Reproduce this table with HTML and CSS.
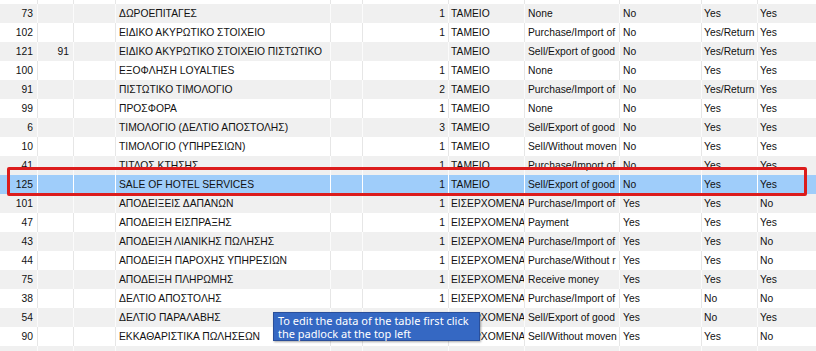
FILE: index.html
```html
<!DOCTYPE html>
<html lang="el">
<head>
<meta charset="utf-8">
<title>Document types</title>
<link rel="stylesheet" href="styles.css">
</head>
<body>
<div class="screen">
  <div class="grid">
    <div class="row w cut-top"><span></span><span></span><span></span><span></span><span></span><span></span><span></span><span></span><span></span><span></span><span></span></div>
    <div class="row g"><span class="r">73</span><span class="r"></span><span></span><span>ΔΩΡΟΕΠΙΤΑΓΕΣ</span><span></span><span class="r">1</span><span>ΤΑΜΕΙΟ</span><span>None</span><span>No</span><span>Yes</span><span>Yes</span></div>
    <div class="row w"><span class="r">102</span><span class="r"></span><span></span><span>ΕΙΔΙΚΟ ΑΚΥΡΩΤΙΚΟ ΣΤΟΙΧΕΙΟ</span><span></span><span class="r">1</span><span>ΤΑΜΕΙΟ</span><span>Purchase/Import of</span><span>No</span><span>Yes/Return</span><span>Yes</span></div>
    <div class="row g"><span class="r">121</span><span class="r">91</span><span></span><span>ΕΙΔΙΚΟ ΑΚΥΡΩΤΙΚΟ ΣΤΟΙΧΕΙΟ ΠΙΣΤΩΤΙΚΟ</span><span></span><span class="r"></span><span>ΤΑΜΕΙΟ</span><span>Sell/Export of good</span><span>No</span><span>Yes/Return</span><span>Yes</span></div>
    <div class="row w"><span class="r">100</span><span class="r"></span><span></span><span>ΕΞΟΦΛΗΣΗ LOYALTIES</span><span></span><span class="r">1</span><span>ΤΑΜΕΙΟ</span><span>None</span><span>No</span><span>Yes</span><span>Yes</span></div>
    <div class="row g"><span class="r">91</span><span class="r"></span><span></span><span>ΠΙΣΤΩΤΙΚΟ ΤΙΜΟΛΟΓΙΟ</span><span></span><span class="r">2</span><span>ΤΑΜΕΙΟ</span><span>Purchase/Import of</span><span>No</span><span>Yes/Return</span><span>Yes</span></div>
    <div class="row w"><span class="r">99</span><span class="r"></span><span></span><span>ΠΡΟΣΦΟΡΑ</span><span></span><span class="r">1</span><span>ΤΑΜΕΙΟ</span><span>None</span><span>No</span><span>Yes</span><span>Yes</span></div>
    <div class="row g"><span class="r">6</span><span class="r"></span><span></span><span>ΤΙΜΟΛΟΓΙΟ (ΔΕΛΤΙΟ ΑΠΟΣΤΟΛΗΣ)</span><span></span><span class="r">3</span><span>ΤΑΜΕΙΟ</span><span>Sell/Export of good</span><span>No</span><span>Yes</span><span>Yes</span></div>
    <div class="row w"><span class="r">10</span><span class="r"></span><span></span><span>ΤΙΜΟΛΟΓΙΟ (ΥΠΗΡΕΣΙΩΝ)</span><span></span><span class="r">1</span><span>ΤΑΜΕΙΟ</span><span>Sell/Without moven</span><span>No</span><span>Yes</span><span>Yes</span></div>
    <div class="row g"><span class="r">41</span><span class="r"></span><span></span><span>ΤΙΤΛΟΣ ΚΤΗΣΗΣ</span><span></span><span class="r">1</span><span>ΤΑΜΕΙΟ</span><span>Purchase/Import of</span><span>No</span><span>Yes</span><span>Yes</span></div>
    <div class="row sel"><span class="r">125</span><span class="r"></span><span></span><span>SALE OF HOTEL SERVICES</span><span></span><span class="r">1</span><span>ΤΑΜΕΙΟ</span><span>Sell/Export of good</span><span>No</span><span>Yes</span><span>Yes</span></div>
    <div class="row g"><span class="r">101</span><span class="r"></span><span></span><span>ΑΠΟΔΕΙΞΕΙΣ ΔΑΠΑΝΩΝ</span><span></span><span class="r">1</span><span>ΕΙΣΕΡΧΟΜΕΝΑ</span><span>Purchase/Import of</span><span>Yes</span><span>Yes</span><span>No</span></div>
    <div class="row w"><span class="r">47</span><span class="r"></span><span></span><span>ΑΠΟΔΕΙΞΗ ΕΙΣΠΡΑΞΗΣ</span><span></span><span class="r">1</span><span>ΕΙΣΕΡΧΟΜΕΝΑ</span><span>Payment</span><span>Yes</span><span>Yes</span><span>Yes</span></div>
    <div class="row g"><span class="r">43</span><span class="r"></span><span></span><span>ΑΠΟΔΕΙΞΗ ΛΙΑΝΙΚΗΣ ΠΩΛΗΣΗΣ</span><span></span><span class="r">1</span><span>ΕΙΣΕΡΧΟΜΕΝΑ</span><span>Purchase/Import of</span><span>Yes</span><span>Yes</span><span>No</span></div>
    <div class="row w"><span class="r">44</span><span class="r"></span><span></span><span>ΑΠΟΔΕΙΞΗ ΠΑΡΟΧΗΣ ΥΠΗΡΕΣΙΩΝ</span><span></span><span class="r">1</span><span>ΕΙΣΕΡΧΟΜΕΝΑ</span><span>Purchase/Without r</span><span>Yes</span><span>Yes</span><span>No</span></div>
    <div class="row g"><span class="r">75</span><span class="r"></span><span></span><span>ΑΠΟΔΕΙΞΗ ΠΛΗΡΩΜΗΣ</span><span></span><span class="r">1</span><span>ΕΙΣΕΡΧΟΜΕΝΑ</span><span>Receive money</span><span>Yes</span><span>Yes</span><span>Yes</span></div>
    <div class="row w"><span class="r">38</span><span class="r"></span><span></span><span>ΔΕΛΤΙΟ ΑΠΟΣΤΟΛΗΣ</span><span></span><span class="r">1</span><span>ΕΙΣΕΡΧΟΜΕΝΑ</span><span>Purchase/Import of</span><span>Yes</span><span>No</span><span>No</span></div>
    <div class="row g"><span class="r">54</span><span class="r"></span><span></span><span>ΔΕΛΤΙΟ ΠΑΡΑΛΑΒΗΣ</span><span></span><span class="r">1</span><span>ΕΙΣΕΡΧΟΜΕΝΑ</span><span>Sell/Export of good</span><span>Yes</span><span>No</span><span>Yes</span></div>
    <div class="row w"><span class="r">90</span><span class="r"></span><span></span><span>ΕΚΚΑΘΑΡΙΣΤΙΚΑ ΠΩΛΗΣΕΩΝ</span><span></span><span class="r">1</span><span>ΕΙΣΕΡΧΟΜΕΝΑ</span><span>Sell/Without moven</span><span>Yes</span><span>Yes</span><span>No</span></div>
    <div class="row g"><span></span><span></span><span></span><span></span><span></span><span></span><span></span><span></span><span></span><span></span><span></span></div>
  </div>
  <div class="highlight"></div>
  <div class="tooltip">To edit the data of the table first click<br>the padlock at the top left</div>
</div>
</body>
</html>
```
FILE: styles.css
```css
html, body {
  margin: 0;
  padding: 0;
  background: #ffffff;
}
.screen {
  position: relative;
  width: 816px;
  height: 351px;
  overflow: hidden;
  font-family: "Liberation Sans", Arial, sans-serif;
  font-size: 10.3px;
  color: #111111;
}
.grid {
  display: flex;
  flex-direction: column;
}
.row {
  display: grid;
  grid-template-columns: 38px 36px 42px 215px 32px 86px 76px 95px 82px 56px 1fr;
  height: 19px;
  flex: none;
}
.row.cut-top {
  height: 4px;
}
.row > span {
  box-sizing: border-box;
  display: flex;
  align-items: center;
  white-space: nowrap;
  overflow: hidden;
  padding-left: 3px;
  border-right: 1px solid #e6e6e6;
  line-height: 19px;
}
.row > span:nth-child(7),
.row > span:nth-child(10),
.row > span:nth-child(11) {
  padding-left: 2px;
}
.row > span.r {
  justify-content: flex-end;
  padding-left: 0;
  padding-right: 3px;
}
.row > span:first-child.r {
  padding-right: 4px;
}
.row > span:nth-child(2).r {
  padding-right: 4px;
}
.row > span:last-child {
  border-right: none;
}
.row.w {
  background: #ffffff;
}
.row.g {
  background: #f0f0f0;
}
.row.g > span {
  border-right-color: #fbfbfb;
}
.row.sel {
  background: #9fcdfa;
}
.row.sel > span {
  border-right-color: #ffffff;
}
.highlight {
  position: absolute;
  left: 7px;
  top: 167px;
  width: 800px;
  height: 29px;
  box-sizing: border-box;
  border: 3px solid #dc1c1c;
  border-radius: 2px;
}
.tooltip {
  position: absolute;
  left: 273px;
  top: 312px;
  width: 207px;
  height: 29px;
  box-sizing: border-box;
  padding: 1px 4px;
  background: #3568c3;
  border: 1px solid #2a4f9a;
  box-shadow: 1px 1px 2px rgba(0, 0, 0, 0.35);
  color: #ffffff;
  font-family: "Noto Sans", "Open Sans", sans-serif;
  font-size: 11px;
  line-height: 13px;
  white-space: nowrap;
}
```
